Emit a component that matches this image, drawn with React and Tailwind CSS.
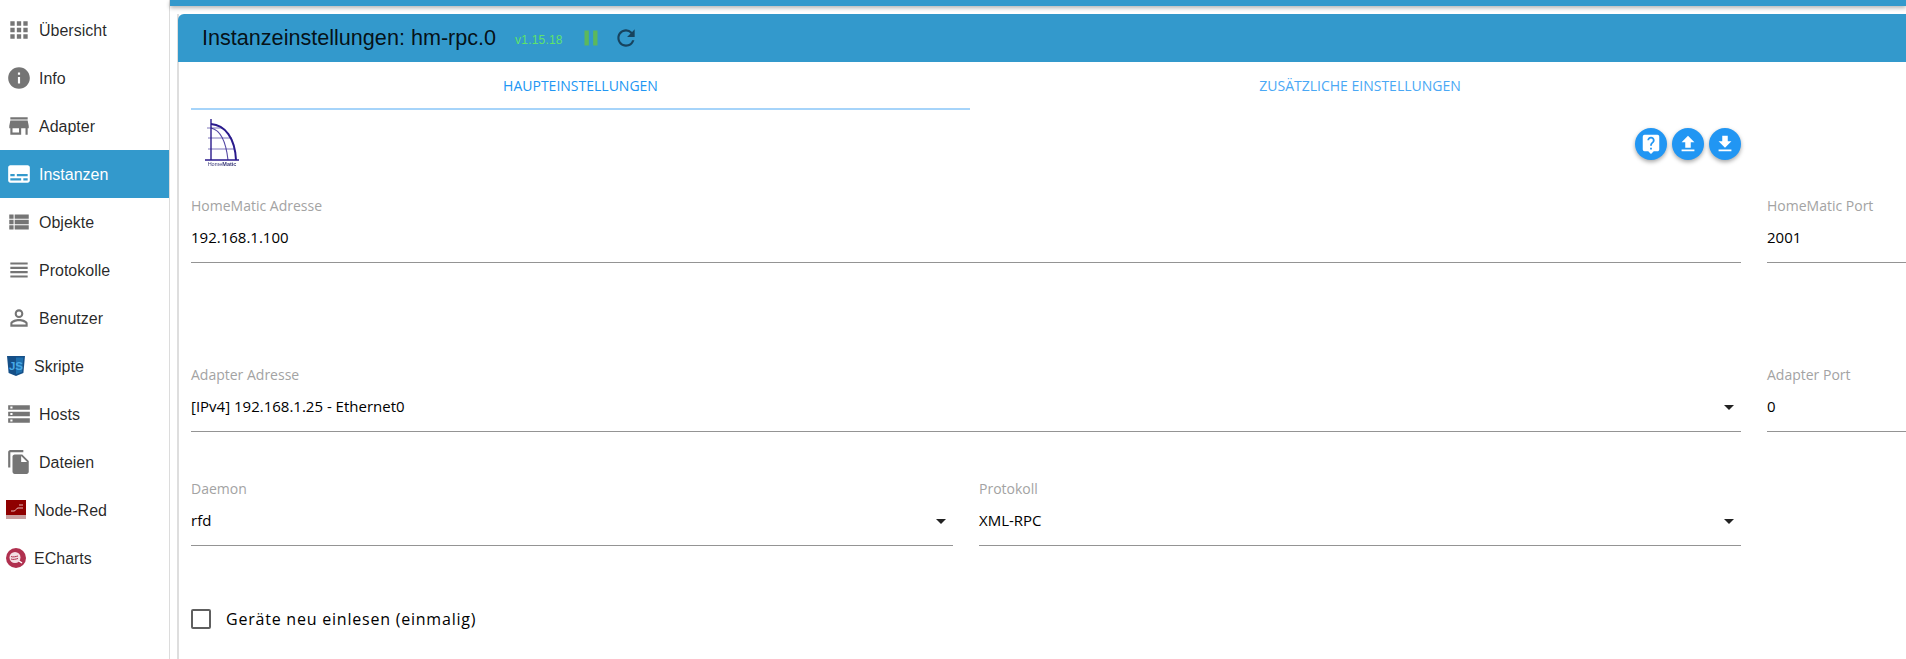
import React from "react";
import { MdApps, MdInfo, MdStore, MdSubtitles, MdViewList, MdViewHeadline, MdPersonOutline, MdStorage, MdFileCopy, MdPause, MdRefresh, MdArrowDropDown, MdFileUpload, MdFileDownload, MdLiveHelp } from "react-icons/md";

const JsIcon = () => (
  <svg width="20" height="22" viewBox="0 0 20 22" className="ml-[6px] mr-[8px] shrink-0">
    <path d="M1 1h18l-1.6 17L10 21l-7.4-3z" fill="#154f87" />
    <path d="M10 2.5h7.3l-1.3 14.6-6 2.2z" fill="#1d6fae" />
    <text x="10" y="14.5" textAnchor="middle" fontSize="11.5" fontWeight="700" fill="#47a9e6" fontFamily="'Liberation Sans', sans-serif">JS</text>
  </svg>
);
const RedIcon = () => (
  <svg width="20" height="20" viewBox="0 0 20 20" className="ml-[6px] mr-[8px] shrink-0">
    <rect width="20" height="19" fill="#8f0000" />
    <rect y="15" width="20" height="4" fill="#c9a0a0" />
    <path d="M5 11h3c2 0 2-3 4-3h1M13 5h4M13 8h4" stroke="#e6b8b8" strokeWidth="1" fill="none" />
  </svg>
);
const EchartsIcon = () => (
  <svg width="20" height="20" viewBox="0 0 20 20" className="ml-[6px] mr-[8px] shrink-0">
    <circle cx="10" cy="10" r="10" fill="#b0304f" />
    <circle cx="9" cy="9.5" r="5.5" fill="#f4dfe4" />
    <path d="M5 8.5c2 1 5 0 7-.5M5 11c2 1 5 0 7-.5" stroke="#b0304f" strokeWidth="1" fill="none" />
    <path d="M13 13l3 2" stroke="#fff" strokeWidth="1.5" />
  </svg>
);

const items = [
  { label: "Übersicht", Icon: MdApps },
  { label: "Info", Icon: MdInfo },
  { label: "Adapter", Icon: MdStore },
  { label: "Instanzen", Icon: MdSubtitles, active: true },
  { label: "Objekte", Icon: MdViewList },
  { label: "Protokolle", Icon: MdViewHeadline },
  { label: "Benutzer", Icon: MdPersonOutline },
  { label: "Skripte", Custom: JsIcon },
  { label: "Hosts", Icon: MdStorage },
  { label: "Dateien", Icon: MdFileCopy },
  { label: "Node-Red", Custom: RedIcon },
  { label: "ECharts", Custom: EchartsIcon },
];

function NavItem({ label, Icon, Custom, active }) {
  return (
    <div className={`flex h-12 items-center text-[16px] ${active ? "bg-[#3399cc] text-white" : "text-black/85"}`}>
      {Custom ? <Custom /> : (
        <span className={`flex w-[39px] shrink-0 pl-[6px] ${active ? "text-white" : "text-[#757575]"}`}>
          <Icon size={26} />
        </span>
      )}
      <span className="mt-[2px] leading-none">{label}</span>
    </div>
  );
}

function Field({ label, value, select, className }) {
  return (
    <div className={`relative h-[66px] border-b border-[#949494] ${className}`}>
      <div className="text-[14px] leading-[18px] text-[#a3a3a3]">{label}</div>
      <div className="mt-[13px] text-[15px] leading-[18px] text-black">{value}</div>
      {select && <MdArrowDropDown size={24} className="absolute right-[0px] top-[29px] text-[#222]" />}
    </div>
  );
}

function RoundBtn({ Icon, size = 22, className = "" }) {
  return (
    <div className={`flex h-[32px] w-[32px] items-center justify-center rounded-full bg-[#2196f3] text-white shadow-[0_2px_4px_rgba(0,0,0,0.35)] ${className}`}>
      <Icon size={size} />
    </div>
  );
}

const HomeMaticLogo = () => (
  <svg width="36" height="48" viewBox="0 0 36 48" className="blur-[0.4px]">
    <g fill="none" stroke="#2a1a8c">
      <path d="M6 0v41" strokeWidth="1.4" />
      <path d="M6 5c14 1 24 14 25 36" strokeWidth="2" />
      <path d="M6 9c9 2 15 14 17 32" strokeWidth="1.1" opacity="0.8" />
      <path d="M2 9h16M3 19h24M3 30h27" strokeWidth="1" opacity="0.6" />
      <path d="M0 41h34" strokeWidth="1.4" />
    </g>
    <text x="17" y="47" textAnchor="middle" fontSize="5.5" fill="#3a3a7a" fontFamily="'Liberation Sans', sans-serif">Home<tspan fontWeight="700">Matic</tspan></text>
  </svg>
);

export default function App() {
  return (
    <div className="flex h-[659px] w-[1906px] overflow-hidden bg-white [font-family:'Liberation_Sans',sans-serif]">
      <nav className="h-full w-[170px] shrink-0 border-r border-[#dcdcdc] pt-[6px]">
        {items.map((it) => <NavItem key={it.label} {...it} />)}
      </nav>
      <main className="flex min-w-0 flex-1 flex-col">
        <div className="h-[6px] shrink-0 bg-[#3399cc] shadow-[0_2px_4px_rgba(0,0,0,0.3)]" />
        <section className="ml-[7px] mt-[8px] flex min-h-0 flex-1 flex-col border-l-2 border-[#dedede]">
          <header className="-ml-[1px] flex h-[48px] shrink-0 items-center rounded-tl-[6px] bg-[#3399cc] pl-[24px] text-black/90">
            <span className="text-[21.6px] leading-none">Instanzeinstellungen: hm-rpc.0</span>
            <span className="ml-[19px] mt-[3px] text-[12px] leading-none tracking-[0.2px] text-[#5fe36a]">v1.15.18</span>
            <MdPause size={26} className="ml-[15px] text-[#5cb85c]" />
            <MdRefresh size={26} className="ml-[9px] text-[#17435e]" />
          </header>
          <div className="min-h-0 flex-1 pl-[12px] [font-family:'Open_Sans',sans-serif]">
            <div className="flex h-[48px] w-[1559px] text-[14px]">
              <div className="flex h-[48px] w-[779px] items-center justify-center border-b-2 border-b-[#a6d4fa] text-[#2196f3]">HAUPTEINSTELLUNGEN</div>
              <div className="flex h-[47px] flex-1 items-center justify-center text-[#4aa8f5]">ZUSÄTZLICHE EINSTELLUNGEN</div>
            </div>
            <div className="flex h-[47px] w-[1550px] items-start justify-between">
              <div className="ml-[14px] mt-[9px]"><HomeMaticLogo /></div>
              <div className="mt-[18px] flex gap-[5px]">
                <RoundBtn Icon={MdLiveHelp} />
                <RoundBtn Icon={MdFileUpload} />
                <RoundBtn Icon={MdFileDownload} />
              </div>
            </div>
            <div className="mt-[40px] flex gap-[26px]">
              <Field className="w-[1550px] shrink-0" label="HomeMatic Adresse" value="192.168.1.100" />
              <Field className="w-[200px] shrink-0" label="HomeMatic Port" value="2001" />
            </div>
            <div className="mt-[103px] flex gap-[26px]">
              <Field className="w-[1550px] shrink-0" label="Adapter Adresse" value="[IPv4] 192.168.1.25 - Ethernet0" select />
              <Field className="w-[200px] shrink-0" label="Adapter Port" value="0" />
            </div>
            <div className="mt-[48px] flex w-[1550px] gap-[26px]">
              <Field className="flex-1" label="Daemon" value="rfd" select />
              <Field className="flex-1" label="Protokoll" value="XML-RPC" select />
            </div>
            <div className="mt-[61px] flex items-center text-[16px] tracking-[0.78px] text-black">
              <span className="h-[20px] w-[20px] rounded-[2px] border-2 border-[#5f5f5f]" />
              <span className="ml-[15px]">Geräte neu einlesen (einmalig)</span>
            </div>
          </div>
        </section>
      </main>
    </div>
  );
}
